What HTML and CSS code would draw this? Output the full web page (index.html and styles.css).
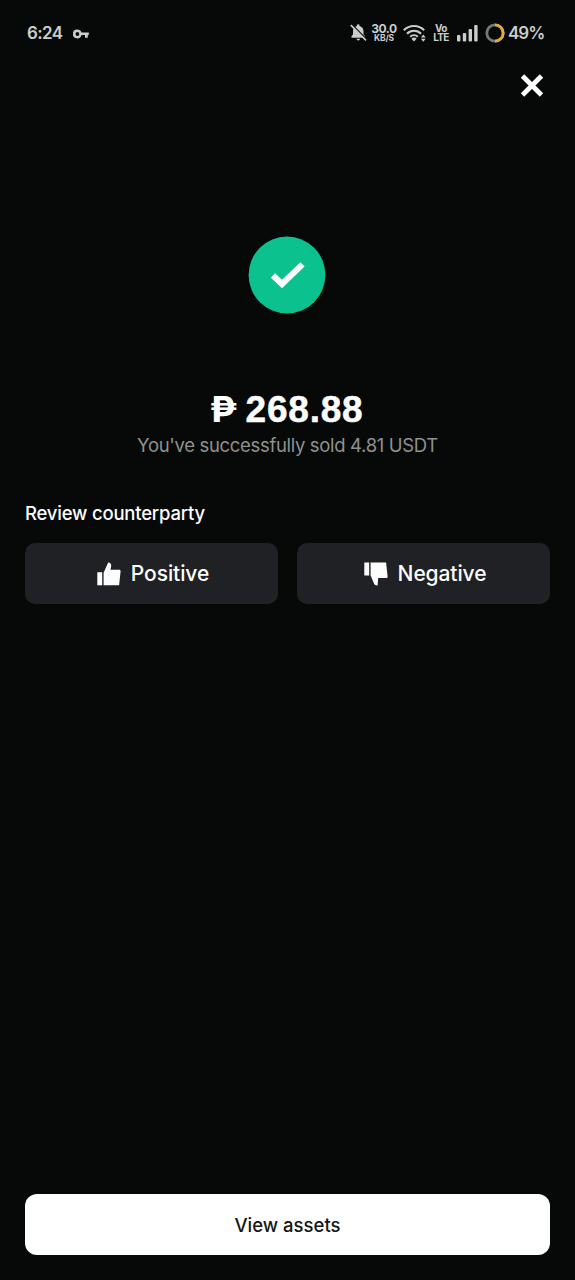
FILE: index.html
```html
<!DOCTYPE html>
<html lang="en">
<head>
<meta charset="utf-8">
<title>Order completed</title>
<link rel="stylesheet" href="styles.css">
</head>
<body>
<div class="screen">
  <header class="status">
    <span class="time">6:24</span>
    <svg class="key" width="17" height="10" viewBox="0 0 17 10"><path fill="currentColor" fill-rule="evenodd" d="M4.400.6a4.400 4.400 0 0 1 4.100 2.800h7.300v2.600h-1v2.700h-2.800V6H8.500A4.400 4.400 0 1 1 4.400.6zm0 2.500a1.900 1.900 0 1 0 0 3.800 1.900 1.900 0 0 0 0-3.800z"/></svg>
    <svg class="bell" width="17" height="18" viewBox="0 0 17 18"><path fill="currentColor" d="M1.500 13.800V11.900L3 10.400V7c0-2.500 1.600-4.400 3.900-5v-.5a1.300 1.300 0 0 1 2.600 0V2c2.200.6 4 2.500 4 5v3.400l1.500 1.500v1.900zM6.500 14.800H10a1.700 1.700 0 0 1-3.500 0z"/><path d="M1.900.5L17 15.700" stroke="#060908" stroke-width="1.500"/><path d="M.8 1.100L16 16.400" stroke="currentColor" stroke-width="1.600"/></svg>
    <span class="stack speed"><b>30.0</b><small>KB/S</small></span>
    <svg class="wifi" width="23" height="18" viewBox="0 0 23 18"><g fill="none" stroke="currentColor" stroke-width="2.100"><path d="M.8 6.300a14.300 14.300 0 0 1 20.400 0"/><path d="M4 9.700a9.700 9.700 0 0 1 14 0"/><path d="M7.200 12.800a5.500 5.500 0 0 1 7.600 0"/></g><path fill="currentColor" d="M11 17.600l-2.600-2.900a3.700 3.700 0 0 1 5.200 0zM17.900 13.600l2.400-3 2.400 3zM17.900 14.700h4.800l-2.400 3z"/></svg>
    <span class="stack volte"><b>Vo</b><b>LTE</b></span>
    <svg class="signal" width="21" height="17" viewBox="0 0 21 17" fill="currentColor"><rect x="0" y="10" width="3.400" height="6.500" rx="1"/><rect x="5.800" y="8" width="3.400" height="8.500" rx="1"/><rect x="11.600" y="4" width="3.400" height="12.500" rx="1"/><rect x="17.200" y="0" width="3.400" height="16.500" rx="1"/></svg>
    <svg class="ring" width="20" height="20" viewBox="0 0 20 20" fill="none" stroke-width="2.800"><circle cx="10" cy="10" r="8.200" stroke="#777977"/><path d="M10 1.800a8.200 8.200 0 0 1 0 16.400" stroke="#e5aa3c"/></svg>
    <span class="battery">49%</span>
  </header>
  <nav class="nav"><svg width="24" height="24" viewBox="0 0 24 24"><path d="M2.500 2l19 19M21.500 2l-19 19" stroke="#fff" stroke-width="4.800"/></svg></nav>
  <main class="result">
    <svg class="badge" width="78" height="78" viewBox="0 0 78 78"><circle cx="39" cy="39" r="38.400" fill="#0bc18d"/><path d="M25 39.500l9 8.500L54.500 28.300" fill="none" stroke="#fff" stroke-width="6"/></svg>
    <h1 class="amount"><span class="currency">₱</span><span class="value">268.88</span></h1>
    <p class="note">You've successfully sold 4.81 USDT</p>
  </main>
  <section class="review">
    <h2 class="heading">Review counterparty</h2>
    <div class="choices">
      <button class="choice"><svg width="24" height="24" viewBox="0 0 24 24" fill="currentColor"><path d="M.3 10.300h4.900v13H.3zM6.600 23.300V10.700L11.200.5c2.200.2 3.200 1.500 3 3.600l-.7 3.600h8.600c1 0 1.600.7 1.500 1.600l-1.500 14z"/></svg><span>Positive</span></button>
      <button class="choice"><svg width="24" height="24" viewBox="0 0 24 24" fill="currentColor"><path d="M.3.500h4.900v13H.3zM6.600.500h15.500l1.500 14c.1.900-.5 1.600-1.500 1.600h-7.900l-.6 7.300c-2 .1-3-.5-3.500-1.700L6.600 13.500z"/></svg><span>Negative</span></button>
    </div>
  </section>
  <footer class="footer"><button class="primary"><span>View assets</span></button></footer>
</div>
</body>
</html>
```
FILE: styles.css
```css
* { box-sizing: border-box; }
body { margin: 0; background: #060908; color: #fcfdfd; font-family: Inter, "Liberation Sans", sans-serif; }
svg { display: block; flex: none; }
button { border: 0; padding: 0; font-family: inherit; color: inherit; }
.screen { height: 1280px; display: flex; flex-direction: column; overflow: hidden; }
.status { height: 66px; padding-left: 27px; display: flex; align-items: center; color: #cbcdcb; font-weight: 600; font-size: 17px; white-space: nowrap; }
.time { width: 46px; letter-spacing: -.6px; }
.key { margin-right: 260px; margin-top: 1px; }
.bell { margin-right: 4px; }
.stack { display: flex; flex-direction: column; align-items: center; }
.speed { width: 26px; }
.speed b { font-size: 12px; line-height: 10px; font-weight: 700; letter-spacing: -.4px; }
.speed small { font-size: 8.500px; line-height: 8px; font-weight: 700; letter-spacing: -.2px; }
.wifi { margin-left: 6px; margin-right: 7px; }
.volte { width: 16px; }
.volte b { font-size: 10px; line-height: 9px; font-weight: 700; letter-spacing: -.6px; }
.signal { margin-left: 8px; margin-right: 7px; }
.battery { margin-left: 3px; letter-spacing: -1px; }
.nav { height: 39px; padding-right: 31px; display: flex; align-items: center; justify-content: flex-end; }
.result { padding-top: 131px; display: flex; flex-direction: column; align-items: center; }
.badge { margin-right: 1px; }
.amount { margin: 75px 0 0; display: flex; align-items: center; gap: 9px; height: 42px; font-size: 35px; line-height: 42px; font-weight: 700; }
.currency { transform: translateY(-1px) scaleX(1.1); }
.value { font-family: "Liberation Sans", Arial, sans-serif; font-size: 37px; letter-spacing: .8px; -webkit-text-stroke: .5px currentColor; }
.note { margin: 2px 0 0; font-size: 18.500px; line-height: 24px; letter-spacing: -.33px; color: #8f918f; }
.review { padding: 43px 25px 0; }
.heading { margin: 0; font-size: 18.500px; line-height: 26px; font-weight: 500; letter-spacing: -.2px; }
.choices { margin-top: 17px; display: grid; grid-template-columns: 1fr 1fr; gap: 19px; }
.choice { height: 61px; padding-left: 3px; border-radius: 10px; background: #202124; display: flex; align-items: center; justify-content: center; gap: 10px; font-size: 21px; letter-spacing: -.1px; font-weight: 500; }
.footer { margin-top: auto; padding: 0 25px 25px; }
.primary { width: 100%; height: 61px; border-radius: 12px; background: #fff; color: #151716; font-size: 18.500px; font-weight: 500; }
```
